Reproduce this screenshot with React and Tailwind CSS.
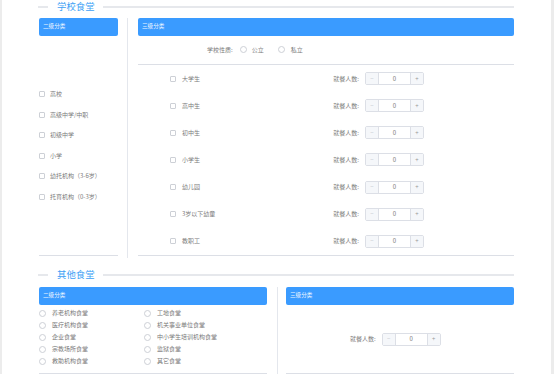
import React from "react";

const font = { fontFamily: '"Noto Sans CJK SC", "Noto Sans", sans-serif' };

function SectionTitle({ title }) {
  return (
    <div className="flex items-center h-[14px] -ml-[1px]">
      <div className="w-[10px] h-[2px] bg-[#e6e8ec]" />
      <div className="ml-[9px] text-[9.4px] leading-none text-[#3d9ff5] whitespace-nowrap">
        {title}
      </div>
      <div className="ml-[8px] flex-1 h-[2px] bg-[#e6e8ec]" />
    </div>
  );
}

function Header({ text }) {
  return (
    <div className="h-[18px] rounded-[2px] bg-[#3a9bff] flex items-center pl-[4px] text-[5.6px] leading-none text-[#eef6ff]">
      {text}
    </div>
  );
}

function Checkbox() {
  return <div className="w-[6px] h-[6px] border border-[#cdd0d6] rounded-[1px] bg-white shrink-0" />;
}

function Radio() {
  return <div className="w-[7px] h-[7px] border border-[#cdd0d6] rounded-full bg-white shrink-0" />;
}

function Stepper() {
  return (
    <div className="flex h-[13px] w-[59px] border border-[#dcdfe6] rounded-[2px] text-[6px] leading-none">
      <div className="w-[13px] bg-[#f5f7fa] border-r border-[#dcdfe6] flex items-center justify-center text-[#c0c4cc]">
        −
      </div>
      <div className="flex-1 bg-white flex items-center justify-center text-[#777]">0</div>
      <div className="w-[13px] bg-[#f5f7fa] border-l border-[#dcdfe6] flex items-center justify-center text-[#999]">
        +
      </div>
    </div>
  );
}

const schoolTypes = ["高校", "高级中学/中职", "初级中学", "小学", "幼托机构（3-6岁）", "托育机构（0-3岁）"];
const students = ["大学生", "高中生", "初中生", "小学生", "幼儿园", "3岁以下幼童", "教职工"];
const others = [
  ["养老机构食堂", "工地食堂"],
  ["医疗机构食堂", "机关事业单位食堂"],
  ["企业食堂", "中小学生培训机构食堂"],
  ["宗教场所食堂", "监狱食堂"],
  ["救助机构食堂", "其它食堂"],
];

export default function App() {
  return (
    <div className="w-[554px] h-[374px] overflow-hidden bg-white flex text-[#7a7a7a]" style={font}>
      <div className="w-[2px] bg-[#ececec]" />
      <div className="flex-1 pl-[37px] pr-[37px]">
        <SectionTitle title="学校食堂" />

        <div className="mt-[4px] flex h-[240px]">
          <div className="w-[79px] flex flex-col">
            <Header text="二级分类" />
            <div className="flex-1 flex flex-col justify-center">
              {schoolTypes.map((t) => (
                <div key={t} className="h-[20.5px] flex items-center">
                  <Checkbox />
                  <span className="ml-[5px] text-[6px] leading-none whitespace-nowrap">{t}</span>
                </div>
              ))}
            </div>
            <div className="h-px bg-[#dcdfe6] mb-[2px]" />
          </div>

          <div className="ml-[9px] w-px bg-[#e4e7ed]" />

          <div className="ml-[10px] flex-1 flex flex-col">
            <Header text="三级分类" />
            <div className="h-[28px] flex items-center pl-[69px] text-[6px] leading-none">
              <span>学校性质:</span>
              <div className="ml-[7px]"><Radio /></div>
              <span className="ml-[5px]">公立</span>
              <div className="ml-[14px]"><Radio /></div>
              <span className="ml-[6px]">私立</span>
            </div>
            <div className="h-px bg-[#dcdfe6]" />
            {students.map((s) => (
              <div key={s} className="h-[27.2px] flex items-center pl-[32px] text-[6px] leading-none">
                <Checkbox />
                <span className="ml-[6px] flex-1">{s}</span>
                <span>就餐人数:</span>
                <div className="ml-[6px] mr-[90px]"><Stepper /></div>
              </div>
            ))}
            <div className="h-px bg-[#dcdfe6] mb-[2px]" />
          </div>
        </div>

        <div className="mt-[10px]">
          <SectionTitle title="其他食堂" />
        </div>

        <div className="mt-[5px] flex h-[88px]">
          <div className="w-[228px] flex flex-col">
            <Header text="二级分类" />
            <div className="mt-[2px] flex-1">
              {others.map(([a, b]) => (
                <div key={a} className="h-[12px] grid grid-cols-[105px_1fr] items-center text-[6px] leading-none">
                  <div className="flex items-center">
                    <Radio />
                    <span className="ml-[6px]">{a}</span>
                  </div>
                  <div className="flex items-center">
                    <Radio />
                    <span className="ml-[6px]">{b}</span>
                  </div>
                </div>
              ))}
            </div>
            <div className="h-px bg-[#dcdfe6] mb-[1px]" />
          </div>

          <div className="ml-[10px] w-px bg-[#e4e7ed]" />

          <div className="ml-[8px] flex-1 flex flex-col">
            <Header text="三级分类" />
            <div className="flex-1 flex items-center pl-[64px] text-[6px] leading-none">
              <span>就餐人数:</span>
              <div className="ml-[6px]"><Stepper /></div>
            </div>
            <div className="h-px bg-[#dcdfe6] mb-[1px]" />
          </div>
        </div>
      </div>
      <div className="w-[3px] bg-[#ececec]" />
    </div>
  );
}
